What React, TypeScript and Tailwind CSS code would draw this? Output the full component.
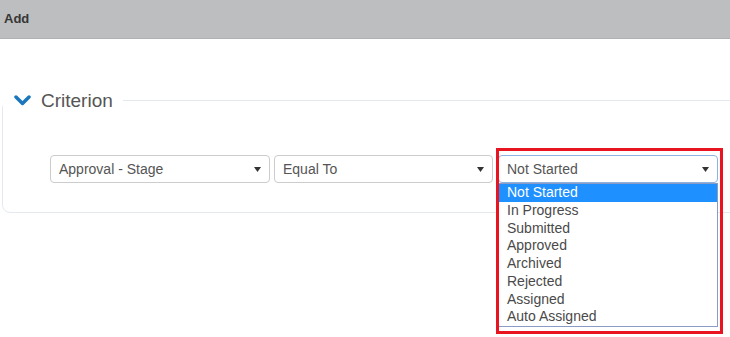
import React, { ReactElement } from 'react'

const options = [
    'Not Started',
    'In Progress',
    'Submitted',
    'Approved',
    'Archived',
    'Rejected',
    'Assigned',
    'Auto Assigned',
];

const Caret = (): ReactElement => (
    <svg width="7" height="5" viewBox="0 0 7 5" className="shrink-0">
        <polygon points="0,0 7,0 3.5,5" fill="#333" />
    </svg>
);

interface FakeSelectProps {
    value: string;
    width: string;
    focused?: boolean;
}

const FakeSelect = ({ value, width, focused }: FakeSelectProps): ReactElement => {
    return <div
        className={`${width} h-[28px] flex items-center justify-between pl-[8px] pr-[8px] rounded-[4px] border bg-white text-[14px] text-[#555] ${focused ? 'border-[#8db3e2]' : 'border-[#cccccc]'}`}
    >
        <span>{value}</span>
        <Caret />
    </div>
}

const App = (): ReactElement => {
    return <div className="w-[730px] h-[337px] overflow-hidden bg-white" style={{ fontFamily: '"Liberation Sans", Arial, sans-serif' }}>
        {/* Header bar */}
        <div className="h-[39px] bg-[#bdbebf] border-b border-[#b0b1b3] flex items-center pl-[4px]">
            <span className="text-[13px] font-bold text-[#363636]">Add</span>
        </div>

        {/* Criterion fieldset */}
        <fieldset className="mt-[49px] ml-[2px] w-[760px] border border-[#e3e9ef] rounded-[8px] px-0 pb-[29px]">
            <legend className="flex items-center pl-[11px] pr-[10px] h-[24px]">
                <svg width="17" height="11" viewBox="0 0 17 11" className="mr-[10px]">
                    <polyline points="2,2 8.5,8.5 15,2" fill="none" stroke="#1a77bd" strokeWidth="3.5" strokeLinejoin="round" strokeLinecap="round" />
                </svg>
                <span className="text-[19px] text-[#555] leading-none">Criterion</span>
            </legend>

            <div className="flex items-start pl-[47px] mt-[43px]">
                <FakeSelect value="Approval - Stage" width="w-[220px]" />
                <div className="ml-[4px]">
                    <FakeSelect value="Equal To" width="w-[219px]" />
                </div>
                <div className="ml-[5px] relative">
                    <FakeSelect value="Not Started" width="w-[220px]" focused />
                    {/* Open dropdown list */}
                    <div className="absolute left-0 top-[28px] w-[220px] bg-white border border-[#8b9bc4] z-10">
                        {options.map((o, i) => (
                            <div
                                key={o}
                                className={`h-[17.75px] leading-[17.75px] pl-[8px] text-[14px] ${i === 0 ? 'bg-[#1e90ff] text-white' : 'text-[#4a4a4a]'}`}
                            >
                                {o}
                            </div>
                        ))}
                    </div>
                    {/* Red annotation box */}
                    <div className="absolute -left-[2px] -top-[7px] w-[227px] h-[186px] border-[3px] border-[#e8141f] z-20 pointer-events-none" />
                </div>
            </div>
        </fieldset>
    </div>
}

export default App;
